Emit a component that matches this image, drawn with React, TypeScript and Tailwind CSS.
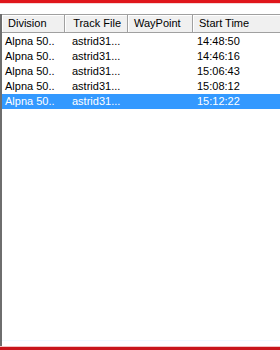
import React from 'react';

type Row = { division: string; track: string; waypoint: string; start: string };

const rows: Row[] = [
  { division: 'Alpna 50..', track: 'astrid31...', waypoint: '', start: '14:48:50' },
  { division: 'Alpna 50..', track: 'astrid31...', waypoint: '', start: '14:46:16' },
  { division: 'Alpna 50..', track: 'astrid31...', waypoint: '', start: '15:06:43' },
  { division: 'Alpna 50..', track: 'astrid31...', waypoint: '', start: '15:08:12' },
  { division: 'Alpna 50..', track: 'astrid31...', waypoint: '', start: '15:12:22' },
];

const HeaderCell: React.FC<{ w: string; align?: string; children?: React.ReactNode }> = ({ w, align = 'justify-start', children }) => (
  <div className={`${w} h-full flex items-center ${align} px-[6px] whitespace-nowrap overflow-hidden border-r border-[#a0a0a0] shadow-[inset_1px_1px_0_#ffffff]`}>
    {children}
  </div>
);

const App: React.FC = () => {
  return (
    <div className="w-[280px] h-[350px] bg-white flex flex-col overflow-hidden text-[11px] text-black" style={{ fontFamily: '"Liberation Sans", Arial, sans-serif' }}>
      <div className="h-[3px] bg-[#e0161b] shrink-0" />
      <div className="h-[1px] bg-[#f6d6d6] shrink-0" />
      <div className="h-[10px] shrink-0" />
      <div className="flex-1 flex flex-col border-l-2 border-[#6e6e6e]">
        <div className="h-[19px] flex bg-[#f0f0f0] border-t border-b border-[#a0a0a0] shrink-0">
          <HeaderCell w="w-[63px]">Division</HeaderCell>
          <HeaderCell w="w-[63px]" align="justify-end">Track File</HeaderCell>
          <HeaderCell w="w-[65px]">WayPoint</HeaderCell>
          <div className="flex-1 h-full flex items-center px-[6px] whitespace-nowrap shadow-[inset_1px_1px_0_#ffffff]">Start Time</div>
        </div>
        <div className="pt-[1px] flex flex-col">
          {rows.map((r, i) => {
            const sel = i === rows.length - 1;
            return (
              <div key={i} className={`h-[15px] flex items-center ${sel ? 'bg-[#3399ff] text-white' : ''}`}>
                <div className="w-[63px] pl-[3px] whitespace-nowrap overflow-hidden">{r.division}</div>
                <div className="w-[63px] pl-[7px] whitespace-nowrap overflow-hidden">{r.track}</div>
                <div className="w-[65px]">{r.waypoint}</div>
                <div className="w-[70px] pl-[4px] whitespace-nowrap">{r.start}</div>
                <div className="flex-1" />
              </div>
            );
          })}
        </div>
        <div className="flex-1" />
        <div className="h-[1px] bg-[#f0fbff] shrink-0" />
        <div className="h-[5px] shrink-0" />
      </div>
      <div className="h-[1px] bg-[#f3c4c4] shrink-0" />
      <div className="h-[3px] bg-[#c8161b] shrink-0" />
    </div>
  );
};

export default App;
